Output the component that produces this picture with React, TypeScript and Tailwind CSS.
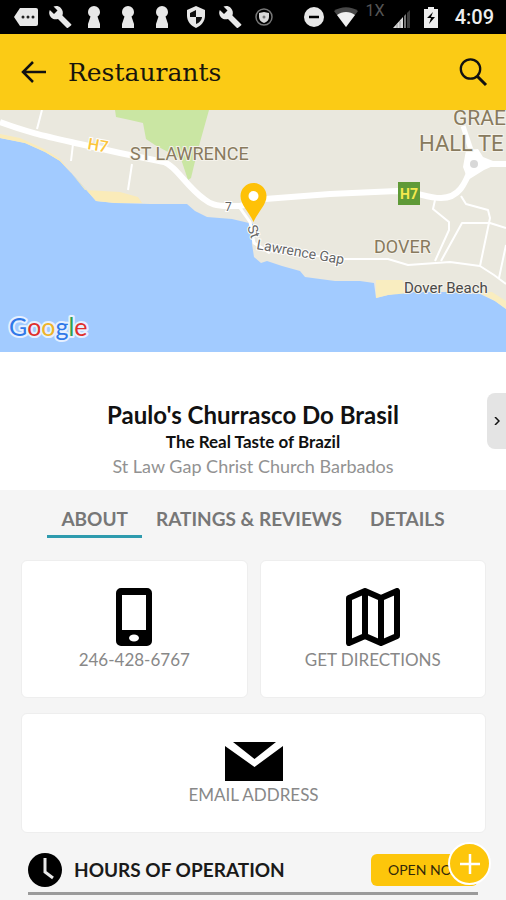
import React from 'react';

const tabs = ['ABOUT', 'RATINGS & REVIEWS', 'DETAILS'];

const WrenchIcon = () => (
  <svg viewBox="0 0 24 24" className="size-6" fill="#e8e8e8" aria-hidden="true">
    <path d="M23 19l-8.600-8.600c1-2.600.4-5.400-1.600-7.400C10.900 1 8 .5 5.500 1.600L9.500 5.500 6 9 1.800 5C.6 7.400 1.100 10.400 3.100 12.400c1.900 1.900 4.600 2.400 6.900 1.500L18.700 22.700c.4.4 1 .4 1.400 0l2.900-2.300c.5-.4.5-1.100 0-1.400z" />
  </svg>
);

const KeyholeIcon = () => (
  <svg viewBox="0 0 24 24" className="size-6" fill="#e8e8e8" aria-hidden="true">
    <path d="M12 1a6 6 0 0 0-6 6c0 2 1 3.500 2.500 4.500L6 19v4h12v-4l-2.500-7.500C17 10.500 18 9 18 7a6 6 0 0 0-6-6z" />
  </svg>
);

const StatusBar = () => (
  <div className="flex h-[34px] items-center justify-between bg-black pr-3 pl-3.5">
    <div className="flex items-center gap-[10px]">
      <svg viewBox="0 0 24 24" className="size-6" aria-hidden="true">
        <path d="M6 3h16a2 2 0 0 1 2 2v14a2 2 0 0 1-2 2H6l-6-9z" fill="#e8e8e8" />
        <g fill="#222">
          <circle cx="9" cy="12" r="1.5" />
          <circle cx="14" cy="12" r="1.5" />
          <circle cx="19" cy="12" r="1.5" />
        </g>
      </svg>
      <WrenchIcon />
      <KeyholeIcon />
      <KeyholeIcon />
      <KeyholeIcon />
      <svg viewBox="0 0 24 24" className="size-6" aria-hidden="true">
        <path d="M12 1l9 4v6c0 5-4 10-9 12-5-2-9-7-9-12V5z" fill="#e8e8e8" />
        <path d="M12 5v7H6V8zM12 12h6c0 3-3 6-6 7z" fill="#111" />
      </svg>
      <WrenchIcon />
      <svg viewBox="0 0 24 24" className="size-6" aria-hidden="true">
        <circle cx="12" cy="12" r="8" fill="none" stroke="#777" strokeWidth="1.5" />
        <path d="M12 7l5 1v4c0 3-2 5-5 6-3-1-5-3-5-6V8z" fill="#d8d8d8" />
        <circle cx="12" cy="12" r="1.5" fill="#777" />
      </svg>
    </div>
    <div className="flex items-center gap-2">
      <svg viewBox="0 0 24 24" className="size-6" aria-hidden="true">
        <circle cx="12" cy="12" r="10" fill="#e8e8e8" />
        <path d="M7 12h10" stroke="#000" strokeWidth="2.5" />
      </svg>
      <svg viewBox="0 0 24 24" className="size-6" aria-hidden="true">
        <path d="M0 6c7-5 17-5 24 0L12 22z" fill="#484848" />
        <path d="M3 10c5-4 13-4 18 0l-9 12z" fill="#f0f0f0" />
      </svg>
      <span className="mb-3 font-['Roboto',sans-serif] text-base leading-4 text-[#555]">1X</span>
      <svg viewBox="0 0 18 24" className="h-6 w-[18px]" aria-hidden="true">
        <path d="M0 23L10 12v11z" fill="#ddd" />
        <path d="M4 23v-4M7 23v-7" stroke="#999" />
        <path d="M11 23V11l2-2v14z" fill="#777" />
        <path d="M14 23V8l3-3v18z" fill="#3c3c3c" />
      </svg>
      <svg viewBox="0 0 24 24" className="size-6" aria-hidden="true">
        <path d="M5 4h4V2h6v2h4v19H5z" fill="#eee" />
        <path d="M14 7l-6 6h4l-2 6 6-7h-4z" fill="#000" />
      </svg>
      <span className="ml-1 font-['Roboto',sans-serif] text-xl font-medium text-[#eee]">4:09</span>
    </div>
  </div>
);

const Header = () => (
  <header className="flex h-[76px] items-center bg-[#fbcb15] pr-[18px] pl-[21px]">
    <button type="button" aria-label="Back">
      <svg viewBox="0 0 26 24" className="h-6 w-[26px]" fill="none" stroke="#111" strokeWidth="2.5" aria-hidden="true">
        <path d="M25 12H2M12 2L2 12l10 10" />
      </svg>
    </button>
    <h1 className="ml-[21px] flex-1 pt-0.5 font-['DejaVu_Serif',serif] text-[25px] text-[#17150c]">Restaurants</h1>
    <button type="button" aria-label="Search">
      <svg viewBox="0 0 30 30" className="size-[30px]" fill="none" stroke="#111" strokeWidth="2.3" aria-hidden="true">
        <circle cx="12.5" cy="12" r="9.7" />
        <path d="M19 19l9 9" strokeWidth="3" />
      </svg>
    </button>
  </header>
);

const MapView = () => (
  <svg viewBox="0 0 506 242" className="block w-full bg-[#a2cbff] font-['Roboto',sans-serif]" role="img" aria-label="Map of St Lawrence">
    <path
      d="M0 0H506V199L495 191 480 184 450 182 405 182 388 185 376 188 374 173 360 171 335 171 305 167 300 161 282 156 267 151 261 153 254 147 252 134 253 114 232 109 207 107 195 101 187 94 150 94 115 93 96 91 75 67 60 51 45 42 25 33 0 28z"
      fill="#eae8de"
    />
    <path d="M0 24l20 4 24 11 16 10 25 31 35 2 18 5 4 6-27 0-19-2-21-24-15-16-15-9-20-9-25-5z" fill="#faebb9" />
    <path d="M376 170h26l8 13-22 2-12 3zM478 182l14 0 14 9v8l-11-8z" fill="#f9edc0" />
    <path d="M115 0l1 7 14 3 13 3 3 16 9 6 26 14 7 21 3-2 6-25L209 0z" fill="#cae6a3" />
    <g fill="none" stroke="#fff" strokeWidth="2" strokeLinejoin="round">
      <path d="M42 0l-5 19M73 34l-2 17M132 54l-4 26" />
      <path d="M435 90l-2 9 16 13v8l-14 31M461 86l5 8 22 6 2 8-10 48M441 151l21-38 28 0 16 5M506 135l-7 33" />
      <path d="M262 140l83 9h43l20 6 42-3 30 4 14 9 12 9" />
      <path d="M240 98l10 14 4 21 16 10" strokeWidth="3" />
      <path
        d="M0 12C30 23 45 26 80 34l40 9 44 9c12 4 22 24 40 37 6 5 12 7 24 7h12l25-7 65-5 67-3c20 0 28 7 44 7 18 0 24-14 31-32"
        strokeWidth="6"
      />
      <path d="M486 54h20" strokeWidth="6" />
      <path d="M463 16l10 30" strokeWidth="5" />
    </g>
    <path d="M466 40l-3 17 5 13 16-10 9-4v-5l-10-4-5-8z" fill="#fff" />
    <circle cx="474" cy="54" r="4" fill="#d8d8d8" />
    <text x="87" y="39" fontSize="16" fontWeight="500" fill="#fbc53c" stroke="#fff" strokeWidth="2" paintOrder="stroke" transform="rotate(10 87 39)">H7</text>
    <g fill="#887a5e" stroke="#f4f2ea" strokeWidth="2" paintOrder="stroke">
      <text x="130" y="50" fontSize="18">ST LAWRENCE</text>
      <text x="374" y="143" fontSize="18">DOVER</text>
      <text x="453" y="15" fontSize="21">GRAE</text>
      <text x="419" y="41" fontSize="22">HALL TE</text>
    </g>
    <g fill="#666" stroke="#fff" strokeWidth="2" paintOrder="stroke">
      <text x="225" y="101" fontSize="12">7</text>
      <text x="247" y="117" fontSize="14" transform="rotate(70 247 117)">St</text>
      <text x="256" y="139" fontSize="14" transform="rotate(10 256 139)">Lawrence Gap</text>
      <text x="404" y="183" fontSize="15" fill="#494949" stroke="#f4f2ea">Dover Beach</text>
    </g>
    <rect x="398" y="72" width="22" height="23" fill="#5f9a37" />
    <text x="409" y="89" fontSize="14" fontWeight="700" fill="#f4e94e" textAnchor="middle">H7</text>
    <path d="M253.5 73C246 73 240.5 79 240.5 86c0 9 8 15 13 26 5-11 13-17 13-26 0-7-5.5-13-13-13z" fill="#fec107" />
    <circle cx="253.5" cy="86" r="5" fill="#fff" />
    <text x="9" y="226" fontSize="25" className="font-['Lato',sans-serif]" stroke="#e6f0ff" strokeWidth="4" strokeLinejoin="round" paintOrder="stroke">
      <tspan fill="#3078e8">G</tspan>
      <tspan fill="#e02f2c">o</tspan>
      <tspan fill="#efb429">o</tspan>
      <tspan fill="#3078e8">g</tspan>
      <tspan fill="#30a04e">l</tspan>
      <tspan fill="#e02f2c">e</tspan>
    </text>
  </svg>
);

const PhoneIcon = () => (
  <svg viewBox="0 0 36 58" className="h-[58px] w-9" aria-hidden="true">
    <path fillRule="evenodd" d="M5 0h26a5 5 0 0 1 5 5v48a5 5 0 0 1-5 5H5a5 5 0 0 1-5-5V5a5 5 0 0 1 5-5zM6 7v35h24V7z" />
    <ellipse cx="18" cy="50" rx="5" ry="3.5" fill="#fff" />
  </svg>
);

const MapIcon = () => (
  <svg viewBox="0 0 54 58" className="h-[58px] w-[54px]" fill="none" stroke="#000" strokeWidth="6" strokeLinejoin="round" aria-hidden="true">
    <path d="M3 10l16-7 16 7 16-7v45l-16 7-16-7-16 7z" />
    <path d="M19 3v45M35 10v45" />
  </svg>
);

const MailIcon = () => (
  <svg viewBox="0 0 58 39" className="h-[39px] w-[58px]" aria-hidden="true">
    <path d="M8 0h43L29.5 17zM0 4l29.5 21L58 4v35H0z" />
  </svg>
);

interface ActionCardProps {
  href: string;
  label: string;
  className: string;
  children: React.ReactNode;
}

const ActionCard = ({ href, label, className, children }: ActionCardProps) => (
  <a href={href} className={`flex flex-col items-center rounded-md border border-[#eeeeee] bg-white text-[17px] leading-6 text-[#888] ${className}`}>
    {children}
    <span className="mt-0.5">{label}</span>
  </a>
);

export default function App() {
  return (
    <div className="w-full overflow-hidden bg-[#f5f5f5] font-['Lato',sans-serif]">
      <StatusBar />
      <Header />
      <MapView />

      <section className="relative bg-white pt-[49px] pb-3 text-center">
        <h2 className="text-2xl leading-7 font-bold text-[#111]">Paulo's Churrasco Do Brasil</h2>
        <p className="text-[17px] leading-[26px] font-bold text-[#111]">The Real Taste of Brazil</p>
        <p className="text-lg leading-[23px] text-[#929292]">St Law Gap Christ Church Barbados</p>
        <button type="button" aria-label="Next" className="absolute top-[41px] right-0 flex h-14 w-[19px] items-center justify-center rounded-l-lg bg-[#e4e4e4]">
          <svg viewBox="0 0 6 8" className="h-2 w-1.5" fill="none" stroke="#111" strokeWidth="1.5" aria-hidden="true">
            <path d="M1 0l4 4-4 4" />
          </svg>
        </button>
      </section>

      <div role="tablist" className="flex justify-center pt-4">
        {tabs.map((tab, i) => (
          <button
            key={tab}
            type="button"
            role="tab"
            aria-selected={i === 0}
            className={`border-b-3 px-3.5 pb-1 text-[19px] leading-[25px] font-bold text-[#777] ${i === 0 ? 'border-[#2e9bae]' : 'border-transparent'}`}
          >
            {tab}
          </button>
        ))}
      </div>

      <main className="px-5 pt-[22px]">
        <div className="grid grid-cols-2 gap-x-3 gap-y-[15px] pl-px">
          <ActionCard href="tel:246-428-6767" label="246-428-6767" className="h-[138px] pt-[27px]">
            <PhoneIcon />
          </ActionCard>
          <ActionCard href="#directions" label="GET DIRECTIONS" className="h-[138px] pt-[27px]">
            <MapIcon />
          </ActionCard>
          <ActionCard href="#email" label="EMAIL ADDRESS" className="col-span-2 h-[120px] pt-7">
            <MailIcon />
          </ActionCard>
        </div>

        <div className="relative mx-2 mt-5 flex items-center border-b-3 border-[#9b9b9b] pb-[5px]">
          <svg viewBox="0 0 34 34" className="size-[34px]" aria-hidden="true">
            <circle cx="17" cy="17" r="17" />
            <path d="M17 5v14l8 6" fill="none" stroke="#e8e8e8" strokeWidth="3" />
          </svg>
          <h3 className="ml-3 flex-1 text-[19px] font-bold text-[#1a1a1a]">HOURS OF OPERATION</h3>
          <button type="button" className="h-8 w-[107px] rounded-md bg-[#fdc60b] pl-[17px] text-left text-sm text-[#33290a]">
            OPEN NOW
          </button>
          <button type="button" aria-label="Add" className="absolute -top-[11px] -right-[13px] flex size-[43px] items-center justify-center rounded-full border-2 border-white bg-[#fdc60b]">
            <svg viewBox="0 0 20 20" className="size-5" stroke="#fff" strokeWidth="2.5" aria-hidden="true">
              <path d="M10 0v20M0 10h20" />
            </svg>
          </button>
        </div>
        <div className="h-[5px]" />
      </main>
    </div>
  );
}
